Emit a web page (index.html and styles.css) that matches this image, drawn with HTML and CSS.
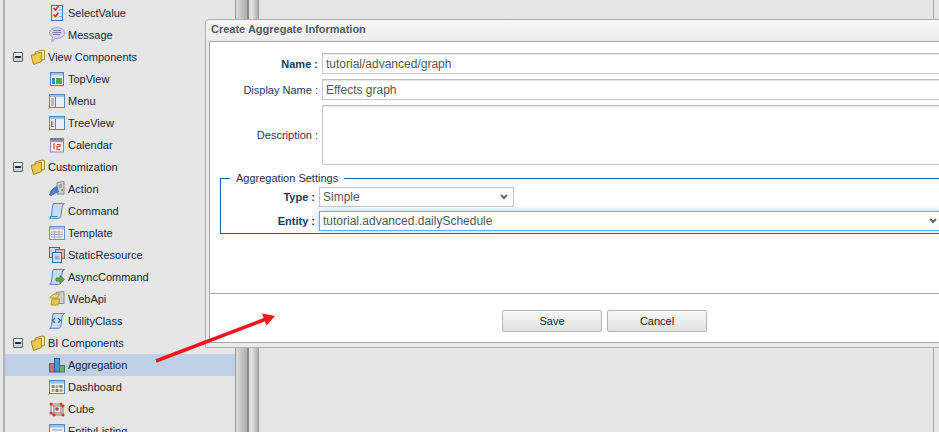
FILE: index.html
```html
<!DOCTYPE html>
<html lang="en">
<head>
<meta charset="utf-8">
<title>Create Aggregate Information</title>
<link rel="stylesheet" href="styles.css">
</head>
<body>
<div class="app">
  <aside class="sidebar">
    <ul class="tree">
      <li class="leaf"><svg class="ico" viewBox="0 0 16 16"><rect x="2.500" y="0.500" width="11" height="15" fill="#dce8f5" stroke="#3f78b5"/><path d="M4.500 3l2 2 3-4M4.500 9.500l2 2 3-4" fill="none" stroke="#c8322a" stroke-width="1.600"/><path d="M10 5h2.500M10 11.500h2.500" stroke="#8a8a8a"/></svg>SelectValue</li>
      <li class="leaf"><svg class="ico" viewBox="0 0 16 16"><path d="M8 .5c4 0 7.500 2.300 7.500 5.500s-3.500 5.500-7.500 5.500c-.7 0-1.200 0-1.800-.2L2.500 15l1-5C1.800 9 .5 7.500 .5 6 .5 2.800 4 .5 8 .5z" fill="#d4d3ee" stroke="#a09ecb"/><path d="M4 3.500h8M3.500 5.500h9M4 7.500h7" stroke="#7f7db4"/></svg>Message</li>
      <li class="branch"><span class="toggle"></span><svg class="folder" viewBox="0 0 16 16"><path d="M5 3.500l1.500-1 6-1.500 2 .5v9L5 13z" fill="#fbeaa6" stroke="#a98a2a"/><path d="M1 6h3.500l1-1.500 6-1.500v9.500l-8 3z" fill="#f0c94e" stroke="#a98a2a"/></svg>View Components</li>
      <li class="leaf"><svg class="ico" viewBox="0 0 16 16"><rect x="1.500" y="1.500" width="13" height="13" fill="#f1f5fa" stroke="#4f7fb5"/><path d="M2 2h12v2.500H2z" fill="#a9c5e6"/><rect x="3" y="7" width="3" height="6" fill="#4d82bd"/><rect x="7" y="7" width="6" height="6" fill="#58a55c"/></svg>TopView</li>
      <li class="leaf"><svg class="ico" viewBox="0 0 16 16"><rect x="0.500" y="1.500" width="15" height="13" fill="#e9eff7" stroke="#5b86b8"/><path d="M1 2h14v2H1z" fill="#9fbfe2"/><path d="M6.500 4v10" stroke="#5b86b8"/><path d="M2 6h3M2 8h3M2 10h3M2 12h3" stroke="#6c8db2"/></svg>Menu</li>
      <li class="leaf"><svg class="ico" viewBox="0 0 16 16"><rect x="0.500" y="1.500" width="15" height="13" fill="#e9eff7" stroke="#5b86b8"/><path d="M1 2h14v2H1z" fill="#9fbfe2"/><path d="M6.500 4v10" stroke="#5b86b8"/><path d="M2.500 6v6M2.500 7h2M2.500 9h2M2.500 11.500h2" stroke="#777" fill="none"/></svg>TreeView</li>
      <li class="leaf"><svg class="ico" viewBox="0 0 16 16"><rect x="1.500" y="1.500" width="13" height="13.500" fill="#f3f1f7" stroke="#8d86a8"/><path d="M2 2h12v3H2z" fill="#9a94b5"/><path d="M3 1v2M6 1v2M9 1v2M12 1v2" stroke="#555"/><path d="M4 7.500l1-.5v5M8 7.500h3v2H8v3h3" fill="none" stroke="#e0501e" stroke-width="1.200"/></svg>Calendar</li>
      <li class="branch"><span class="toggle"></span><svg class="folder" viewBox="0 0 16 16"><path d="M5 3.500l1.500-1 6-1.500 2 .5v9L5 13z" fill="#fbeaa6" stroke="#a98a2a"/><path d="M1 6h3.500l1-1.500 6-1.500v9.500l-8 3z" fill="#f0c94e" stroke="#a98a2a"/></svg>Customization</li>
      <li class="leaf"><svg class="ico" viewBox="0 0 16 16"><path d="M8 1.500l7-1v12.500H8z" fill="#cfcfcf" stroke="#8c8c8c"/><path d="M10 4h3M10 6h3" stroke="#777"/><circle cx="13" cy="9" r="1" fill="#3aa655"/><path d="M.5 14c1-4.500 3.500-7 7.500-8.500l1.500 5.500c-3 .5-5.500 2-7.500 4z" fill="#4f82c4" stroke="#2f5f9e" stroke-width=".7"/></svg>Action</li>
      <li class="leaf"><svg class="ico" viewBox="0 0 16 16"><path d="M4.500 .5h11c-1.500 1-2.500 2-2.500 4l-1 8c-.2 1.700-1 2.800-2.500 2.800H.5c1.200-.7 1.800-1.800 2-3.300l1-8C3.700 2.500 3.800 1.300 4.500 .5z" fill="#c9dcf1" stroke="#4f86c0"/><path d="M1 13.500h7.500" stroke="#4f86c0"/></svg>Command</li>
      <li class="leaf"><svg class="ico" viewBox="0 0 16 16"><rect x="0.500" y="1.500" width="15" height="13" fill="#f1f1f5" stroke="#6f8fbc"/><path d="M1 2h14v2.500H1z" fill="#a9c0de"/><path d="M2 7h12M2 9.500h12M2 12h12M5.500 5.500v8M10 5.500v8" stroke="#a8a8b4"/></svg>Template</li>
      <li class="leaf"><svg class="ico" viewBox="0 0 16 16"><rect x="0.500" y="0.500" width="10" height="10" fill="#cfd8e2" stroke="#47678c"/><rect x="6.500" y="2.500" width="9" height="9" fill="#e4b6b6" stroke="#7c6a6a"/><rect x="3.500" y="5.500" width="9" height="10" fill="#cfe1f3" stroke="#2f6aa8"/><rect x="5.500" y="8.500" width="5" height="4" fill="#8db4dc"/></svg>StaticResource</li>
      <li class="leaf"><svg class="ico" viewBox="0 0 16 16"><path d="M4.500 .5h11c-1.500 1-2.500 2-2.500 4l-1 8c-.2 1.700-1 2.800-2.500 2.800H.5c1.200-.7 1.800-1.800 2-3.300l1-8C3.700 2.500 3.800 1.300 4.500 .5z" fill="#c9dcf1" stroke="#4f86c0"/><path d="M7 9h4V6.500l4.500 4-4.500 4V12H7z" fill="#62a84f" stroke="#3e7d31" stroke-width=".8"/></svg>AsyncCommand</li>
      <li class="leaf"><svg class="ico" viewBox="0 0 16 16"><path d="M7 1.500l8-1v12H7z" fill="#cfcfcf" stroke="#8c8c8c"/><path d="M1 6l4-3h6l-3 4H1z" fill="#f3d777" stroke="#b39436"/><path d="M2 14l1-6 8 0-2 6z" fill="#e9c558" stroke="#b39436"/></svg>WebApi</li>
      <li class="leaf"><svg class="ico" viewBox="0 0 16 16"><path d="M4.500 .5h11c-1.500 1-2.500 2-2.500 4l-1 8c-.2 1.700-1 2.800-2.500 2.800H.5c1.200-.7 1.800-1.800 2-3.300l1-8C3.700 2.500 3.800 1.300 4.500 .5z" fill="#c9dcf1" stroke="#4f86c0"/><path d="M6 5L3.500 7.500 6 10M9 5l2.500 2.500L9 10" fill="none" stroke="#2f6fb0" stroke-width="1.200"/></svg>UtilityClass</li>
      <li class="branch"><span class="toggle"></span><svg class="folder" viewBox="0 0 16 16"><path d="M5 3.500l1.500-1 6-1.500 2 .5v9L5 13z" fill="#fbeaa6" stroke="#a98a2a"/><path d="M1 6h3.500l1-1.500 6-1.500v9.500l-8 3z" fill="#f0c94e" stroke="#a98a2a"/></svg>BI Components</li>
      <li class="leaf selected"><svg class="ico" viewBox="0 0 16 16"><rect x="0.500" y="6.500" width="5" height="8.500" fill="#e46a6a" stroke="#a93c3c"/><rect x="5.500" y="1.500" width="5" height="13.500" fill="#5a8fd0" stroke="#2f5f9e"/><rect x="10.500" y="8.500" width="5" height="6.500" fill="#66b070" stroke="#3a7d46"/></svg>Aggregation</li>
      <li class="leaf"><svg class="ico" viewBox="0 0 16 16"><rect x="0.500" y="1.500" width="15" height="13" fill="#f1f5fa" stroke="#5b86b8"/><path d="M1 2h14v2.500H1z" fill="#9fbfe2"/><rect x="2.500" y="6" width="3" height="3" fill="#5f9c5f"/><rect x="6.500" y="6" width="3" height="3" fill="#e8a33c"/><rect x="10.500" y="6" width="3" height="3" fill="#5b86b8"/><rect x="2.500" y="10" width="3" height="3" fill="#e8a33c"/><rect x="6.500" y="10" width="3" height="3" fill="#5b86b8"/><rect x="10.500" y="10" width="3" height="3" fill="#d9a14a"/></svg>Dashboard</li>
      <li class="leaf"><svg class="ico" viewBox="0 0 16 16"><path d="M2 3h10v9H2zM5 5h9v9H5zM2 3l3 2M12 3l2 2M2 12l3 2M12 12l2 2" fill="none" stroke="#8a8078"/><g fill="#d63b22"><circle cx="2" cy="3" r="1.500"/><circle cx="12" cy="3" r="1.500"/><circle cx="14" cy="5" r="1.500"/><circle cx="8" cy="8" r="1.800"/><circle cx="5" cy="14" r="1.500"/><circle cx="14" cy="14" r="1.500"/><circle cx="2" cy="12" r="1.500"/></g></svg>Cube</li>
      <li class="leaf"><svg class="ico" viewBox="0 0 16 16"><rect x="0.500" y="1.500" width="15" height="13" fill="#eef2f8" stroke="#5b86b8"/><path d="M1 2h14v2.500H1z" fill="#9fbfe2"/><path d="M3 7h10M3 9.500h10M3 12h10" stroke="#8a9ab0"/></svg>EntityListing</li>
    </ul>
  </aside>
  <div class="splitter"><span class="grip"></span><span class="rail"></span></div>
  <main class="workspace"></main>
</div>

<section class="dialog">
  <h1 class="dialog-title">Create Aggregate Information</h1>
  <div class="dialog-panel">
    <form class="dialog-form">
      <div class="fields">
        <label class="field-label strong">Name :</label>
        <input class="text-input" type="text" value="tutorial/advanced/graph">
        <label class="field-label">Display Name :</label>
        <input class="text-input" type="text" value="Effects graph">
        <label class="field-label">Description :</label>
        <textarea class="text-area"></textarea>
      </div>
      <fieldset class="settings">
        <legend class="settings-legend">Aggregation Settings</legend>
        <div class="settings-grid">
          <label class="field-label strong">Type :</label>
          <select class="picker picker-short"><option>Simple</option></select>
          <label class="field-label strong">Entity :</label>
          <select class="picker picker-wide"><option>tutorial.advanced.dailySchedule</option></select>
        </div>
      </fieldset>
    </form>
    <div class="dialog-footer">
      <button class="btn" type="button">Save</button>
      <button class="btn" type="button">Cancel</button>
    </div>
  </div>
</section>

<svg class="arrow" viewBox="0 0 939 432" aria-hidden="true">
  <path d="M156 361L266 319" stroke="#f5141a" stroke-width="3.500" fill="none"/>
  <path d="M275 316L262 313.500 266.500 325.500z" fill="#f5141a"/>
</svg>
</body>
</html>
```
FILE: styles.css
```css
* { box-sizing: border-box; }
html, body { margin: 0; height: 100%; overflow: hidden; }
body {
  width: 939px;
  height: 432px;
  position: relative;
  background: #e6e6e6;
  font-family: "Liberation Sans", Arial, sans-serif;
  font-size: 11px;
  color: #16263a;
}
.app { display: flex; height: 432px; padding-left: 3px; }
.sidebar {
  width: 232px;
  height: 432px;
  overflow: hidden;
  border-left: 2px solid #b2b2b2;
  flex: none;
}
.tree { list-style: none; margin: 2px 0 0; padding: 0; }
.leaf, .branch { height: 22px; display: flex; align-items: center; white-space: nowrap; }
.leaf { padding-left: 44px; }
.branch { padding-left: 8px; }
.selected { background: #bfd1e7; }
.ico { width: 16px; height: 16px; margin-right: 3px; flex: none; }
.folder { width: 16px; height: 16px; margin-right: 2px; flex: none; }
.toggle {
  width: 10px;
  height: 10px;
  margin-right: 7px;
  border: 1px solid #59646e;
  border-radius: 1px;
  background: linear-gradient(#f4f6f7, #c3ced3);
  position: relative;
  flex: none;
}
.toggle::after {
  content: "";
  position: absolute;
  left: 1px;
  right: 1px;
  top: 3px;
  height: 2px;
  background: #23303a;
}
.splitter {
  width: 24px;
  height: 432px;
  flex: none;
  display: flex;
  border-left: 1px solid #9a9a9a;
  border-right: 1px solid #9a9a9a;
}
.grip { width: 13px; background: linear-gradient(90deg, #dcdcdc, #aeaeae); border-right: 2px solid #8a8a8a; }
.rail { flex: 1; background: linear-gradient(90deg, #d8d8d8, #e4e4e4 30%, #adadad); }
.workspace { width: 675px; height: 432px; flex: none; border-right: 1px solid #a8a8a8; }

.dialog {
  position: absolute;
  left: 205px;
  top: 19px;
  width: 798px;
  height: 329px;
  padding: 0 3px 4px;
  display: flex;
  flex-direction: column;
  background: linear-gradient(#f6f6f6, #ececec 22px, #ebebeb);
  border: 1px solid #b0b0b0;
  border-radius: 4px 4px 0 0;
}
.dialog-title {
  margin: 0;
  height: 21px;
  padding: 2px 2px 0;
  font-size: 11px;
  line-height: 14px;
  font-weight: bold;
  color: #555b64;
  flex: none;
}
.dialog-panel {
  flex: 1;
  display: flex;
  flex-direction: column;
  background: #fff;
  border: 1px solid #a6a6a6;
  border-right: 0;
}
.dialog-form { flex: 1; padding: 11px 0 0 0; }
.fields {
  display: grid;
  grid-template-columns: 108px 1fr;
  column-gap: 4px;
  row-gap: 5px;
  align-items: center;
}
.field-label { text-align: right; color: #163a63; white-space: nowrap; }
.strong { font-weight: bold; }
.text-input, .text-area {
  display: block;
  width: 700px;
  margin: 0;
  padding: 1px 3px;
  border: 1px solid #c8c8c8;
  border-top-color: #bdbdbd;
  box-shadow: inset 0 1px 0 #e6e6e6;
  background: #fff;
  font: 12px "Liberation Sans", Arial, sans-serif;
  color: #55565a;
  outline: 0;
  border-radius: 0;
}
.text-input { height: 21px; }
.text-area { height: 60px; resize: none; }
.settings {
  margin: 7px 0 0 10px;
  width: 760px;
  min-width: 0;
  padding: 2px 0 2px;
  border: 1px solid #1a5ea6;
}
.settings-legend {
  margin-left: 9px;
  padding: 0 6px;
  line-height: 13px;
  color: #24303e;
}
.settings-grid {
  display: grid;
  grid-template-columns: 94px auto;
  justify-content: start;
  column-gap: 4px;
  row-gap: 4px;
  align-items: center;
}
.picker {
  display: block;
  height: 20px;
  margin: 0;
  padding: 0 0 0 3px;
  appearance: none;
  background-color: #fff;
  background-image: url("data:image/svg+xml,%3Csvg xmlns='http://www.w3.org/2000/svg' width='8' height='6'%3E%3Cpath d='M1 1l3 3 3-3' fill='none' stroke='%23666' stroke-width='2'/%3E%3C/svg%3E");
  background-repeat: no-repeat;
  background-position: right 5px center;
  font: 12px "Liberation Sans", Arial, sans-serif;
  color: #55565a;
  border: 1px solid #c6c6c6;
  border-radius: 0;
  outline: 0;
}
.picker-short { width: 195px; }
.picker-wide {
  width: 624px;
  border-color: #62ade3;
  box-shadow: 0 0 6px rgba(98, 173, 227, .55);
}
.dialog-footer {
  flex: none;
  height: 49px;
  border-top: 1px solid #a8a8a8;
  padding-top: 16px;
  display: flex;
  justify-content: center;
  align-items: flex-start;
  gap: 5px;
}
.btn {
  width: 100px;
  height: 22px;
  margin: 0;
  padding: 0;
  font: 11px "Liberation Sans", Arial, sans-serif;
  color: #1d2733;
  border: 1px solid #b5b5b5;
  border-radius: 2px;
  background: linear-gradient(#f7f7f7, #e2e2e2);
}
.arrow { position: absolute; left: 0; top: 0; width: 939px; height: 432px; pointer-events: none; }
```
